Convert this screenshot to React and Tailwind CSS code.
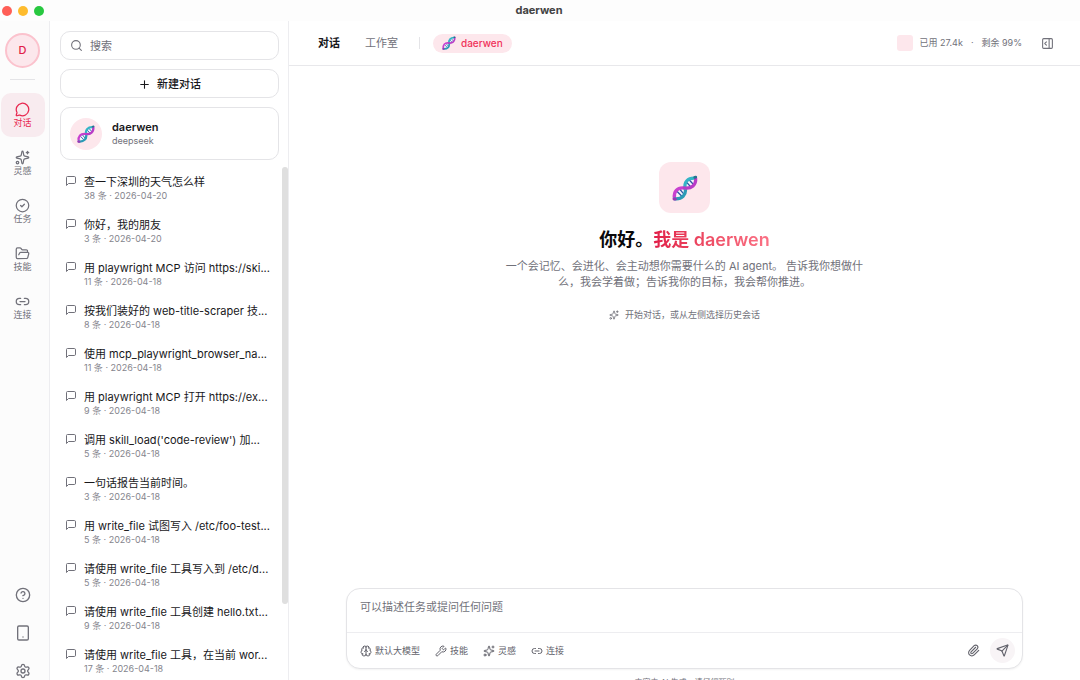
import React from 'react';
import {
  Brain, CircleCheck, CircleHelp, FolderOpen, Link2, MessageCircle, PanelRightOpen,
  Paperclip, Plus, Search, Send, Settings, Sparkles, Wrench,
} from 'lucide-react';
import { FiMessageSquare } from 'react-icons/fi';

const NAV = [
  { label: '对话', icon: MessageCircle, active: true },
  { label: '灵感', icon: Sparkles },
  { label: '任务', icon: CircleCheck },
  { label: '技能', icon: FolderOpen },
  { label: '连接', icon: Link2 },
];

const UTILITIES = [
  { label: '帮助', icon: CircleHelp },
  { label: '设备', icon: Device },
  { label: '设置', icon: Settings },
];

const SESSIONS = [
  { title: '查一下深圳的天气怎么样', count: 38, date: '2026-04-20' },
  { title: '你好，我的朋友', count: 3, date: '2026-04-20' },
  { title: '用 playwright MCP 访问 https://ski...', count: 11, date: '2026-04-18' },
  { title: '按我们装好的 web-title-scraper 技...', count: 8, date: '2026-04-18' },
  { title: '使用 mcp_playwright_browser_na...', count: 11, date: '2026-04-18' },
  { title: '用 playwright MCP 打开 https://ex...', count: 9, date: '2026-04-18' },
  { title: "调用 skill_load('code-review') 加...", count: 5, date: '2026-04-18' },
  { title: '一句话报告当前时间。', count: 3, date: '2026-04-18' },
  { title: '用 write_file 试图写入 /etc/foo-test...', count: 5, date: '2026-04-18' },
  { title: '请使用 write_file 工具写入到 /etc/d...', count: 5, date: '2026-04-18' },
  { title: '请使用 write_file 工具创建 hello.txt...', count: 9, date: '2026-04-18' },
  { title: '请使用 write_file 工具，在当前 wor...', count: 17, date: '2026-04-18' },
];

const TOOLS = [
  { label: '默认大模型', icon: Brain },
  { label: '技能', icon: Wrench },
  { label: '灵感', icon: Sparkles },
  { label: '连接', icon: Link2 },
];

function Device({ className, strokeWidth }) {
  return (
    <svg
      viewBox="0 0 24 24"
      fill="none"
      stroke="currentColor"
      strokeWidth={strokeWidth}
      strokeLinecap="round"
      className={className}
      aria-hidden="true"
    >
      <rect x="4" y="1.5" width="16" height="21" rx="2" />
      <path d="M12 18h.01" />
    </svg>
  );
}

function Dna({ className }) {
  return (
    <svg viewBox="0 0 24 24" fill="none" strokeLinecap="round" className={className} aria-hidden="true">
      {/* gaps between the strands */}
      <ellipse cx="7.4" cy="16.4" rx="4" ry="4" fill="#f6f4fb" />
      <ellipse cx="16.8" cy="7.2" rx="4" ry="4" fill="#f6f4fb" />
      {/* rungs */}
      <path d="M5 15.4l3.8 4M7.6 13.6l3 3.6M13.8 7l3.2 3.6M16.2 4.8l3.6 4" stroke="#2d5aa5" strokeWidth="1.2" />
      {/* strands, crossing in the middle */}
      <path d="M2.2 21.4C1.4 15.4 4.6 11.2 11.4 12" stroke="#c840cf" strokeWidth="3" />
      <path d="M2.6 22C9 22.6 13.4 18.6 12.2 12.4" stroke="#2a9bb5" strokeWidth="3" />
      <path d="M12.2 12.4C11 6.4 14.4 2.6 21.2 3" stroke="#34b4c6" strokeWidth="3" />
      <path d="M11.4 12C18.2 13 22.4 9 21.8 2.8" stroke="#b93cc6" strokeWidth="3" />
      <path d="M1.8 22.2h1.4" stroke="#9a35b5" strokeWidth="2.6" />
      <path d="M21 2.2l.9-.2" stroke="#23758f" strokeWidth="2.6" />
    </svg>
  );
}

function TitleBar() {
  return (
    <header className="flex h-[21px] shrink-0 items-center bg-[#fdfdfd]">
      <div className="flex w-12 shrink-0 gap-[6px] pl-[2px]">
        <span className="size-[10px] rounded-full bg-[#ff5f57]" />
        <span className="size-[10px] rounded-full bg-[#febc2e]" />
        <span className="size-[10px] rounded-full bg-[#28c840]" />
      </div>
      <h1 className="flex-1 text-center text-[11px] font-bold text-[#434343]">daerwen</h1>
      <div className="w-[50px] shrink-0" />
    </header>
  );
}

function Rail() {
  return (
    <nav className="flex w-[50px] shrink-0 flex-col items-center border-r border-[#ededf0] bg-[#fcfcfc] pt-3 pr-1">
      <button className="flex size-[35px] shrink-0 items-center justify-center rounded-full border-2 border-[#fbc2cd] bg-[#fce7ec] text-[11px] font-medium text-[#e11d48]">
        D
      </button>
      <div className="mt-[11px] h-px w-[25px] shrink-0 bg-[#e4e4e7]" />
      <div className="mt-[13px] flex flex-col gap-1">
        {NAV.map(({ label, icon: Icon, active }) => (
          <button
            key={label}
            className={`flex size-11 flex-col items-center justify-center rounded-[10px] pt-px ${
              active ? 'bg-[#f8ebef] text-[#e8274f]' : 'text-[#71717a]'
            }`}
          >
            <Icon className="size-[15px]" strokeWidth={2} />
            <span className="text-[9px] leading-[12px]">{label}</span>
          </button>
        ))}
      </div>
      <div className="mt-auto flex flex-col gap-[22px] pb-px">
        {UTILITIES.map(({ label, icon: Icon }) => (
          <button key={label} aria-label={label} className="text-[#71717a]">
            <Icon className="size-4" strokeWidth={2} />
          </button>
        ))}
      </div>
    </nav>
  );
}

function Sidebar() {
  return (
    <aside className="flex w-[239px] shrink-0 flex-col border-r border-[#ededf0] bg-white">
      <div className="flex flex-col gap-[9px] pt-[10px] pr-[9px] pl-[10px]">
        <label className="flex h-[29px] items-center gap-[7px] rounded-[10px] border border-[#e4e4e7] px-[9px]">
          <Search className="size-[13px] shrink-0 text-[#71717a]" />
          <input
            type="text"
            aria-label="搜索"
            placeholder="搜索"
            className="w-full min-w-0 pt-px text-[11px] outline-none placeholder:text-[#71717a]"
          />
        </label>
        <button className="flex h-[29px] items-center justify-center gap-[6px] rounded-[10px] border border-[#e4e4e7] pt-px text-[11px] font-medium text-[#18181b]">
          <Plus className="size-[13px]" />
          新建对话
        </button>
        <button className="flex h-[53px] items-center gap-[10px] rounded-[10px] border border-[#e4e4e7] px-[9px] text-left">
          <span className="flex size-8 shrink-0 items-center justify-center rounded-full bg-[#fde7ec]">
            <Dna className="size-[18px]" />
          </span>
          <span className="flex flex-col pt-px">
            <span className="text-[11px] leading-[14px] font-semibold text-[#18181b]">daerwen</span>
            <span className="text-[9px] leading-[14px] text-[#71717a]">deepseek</span>
          </span>
        </button>
      </div>

      <div className="mt-[6px] flex min-h-0 flex-1 overflow-hidden">
        <ul className="min-w-0 flex-1">
          {SESSIONS.map((s) => (
            <li key={s.title} className="h-[43px]">
              <button className="flex w-full gap-[7px] pt-[9px] pl-[15px] text-left whitespace-nowrap">
                <FiMessageSquare className="size-3 shrink-0 text-[#71717a]" />
                <span className="flex flex-col">
                  <span className="text-[11px] leading-[15px] text-[#18181b]">{s.title}</span>
                  <span className="text-[9px] leading-[11px] text-[#85858d]">
                    {s.count} 条 · {s.date}
                  </span>
                </span>
              </button>
            </li>
          ))}
        </ul>
        <div className="mt-px h-[85%] w-[6px] shrink-0 rounded-full bg-[#dfdfdf]" />
      </div>
    </aside>
  );
}

function TopBar() {
  return (
    <div className="flex h-[45px] shrink-0 items-center border-b border-[#e8e8eb] pr-[26px] pl-[29px]">
      <button className="pt-px text-[11px] font-semibold text-[#18181b]">对话</button>
      <button className="ml-[25px] pt-px text-[11px] text-[#71717a]">工作室</button>
      <div className="mr-[13px] ml-[21px] h-3 w-px bg-[#e4e4e7]" />
      <button className="flex h-[19px] items-center gap-[5px] rounded-full bg-[#fde7ec] px-[9px] text-[10px] font-medium text-[#f0325a]">
        <Dna className="size-[14px]" />
        daerwen
      </button>
      <div className="ml-auto flex items-center text-[9px] text-[#71717a]">
        <span className="mr-[7px] size-4 rounded-[3px] bg-[#fde7ec]" />
        <span>已用 27.4k</span>
        <span className="mx-2">·</span>
        <span>剩余 99%</span>
        <button aria-label="展开面板" className="ml-[19px]">
          <PanelRightOpen className="size-[13px]" />
        </button>
      </div>
    </div>
  );
}

function Welcome() {
  return (
    <section className="flex flex-1 flex-col items-center pt-24 text-center">
      <div className="flex size-[51px] items-center justify-center rounded-xl bg-[#fde7ec]">
        <Dna className="size-[26px]" />
      </div>
      <h2 className="mt-[15px] text-[18px] leading-6 font-semibold text-[#09090b]">
        你好。
        <span className="bg-linear-to-r from-[#e11d48] to-[#fb7185] bg-clip-text text-transparent">我是 daerwen</span>
      </h2>
      <p className="mt-[6px] w-[360px] text-[11px] leading-4 text-[#71717a]">
        一个会记忆、会进化、会主动想你需要什么的 AI agent。 告诉我你想做什么，我会学着做；告诉我你的目标，我会帮你推进。
      </p>
      <p className="mt-[18px] flex items-center gap-[6px] text-[9px] leading-[14px] text-[#71717a]">
        <Sparkles className="size-[10px]" />
        开始对话，或从左侧选择历史会话
      </p>
    </section>
  );
}

function Composer() {
  return (
    <div className="mx-auto w-full max-w-[677px] shrink-0">
      <form className="rounded-[14px] border border-[#e4e4e7] bg-white shadow-xs">
        <textarea
          aria-label="消息"
          placeholder="可以描述任务或提问任何问题"
          className="block h-[43px] w-full resize-none px-[13px] pt-[10px] text-[11px] leading-4 outline-none placeholder:text-[#71717a]"
        />
        <div className="flex h-[36px] items-center gap-[15px] border-t border-[#ededf0] pr-[7px] pl-[13px] text-[9px] text-[#62626b]">
          {TOOLS.map(({ label, icon: Icon }) => (
            <button key={label} type="button" className="flex items-center gap-[3px]">
              <Icon className="size-[12px]" />
              {label}
            </button>
          ))}
          <div className="ml-auto flex items-center gap-[10px]">
            <button type="button" aria-label="添加附件">
              <Paperclip className="size-[13px]" />
            </button>
            <button aria-label="发送" className="flex size-[25px] items-center justify-center rounded-full bg-[#f8f4f6]">
              <Send className="size-[13px]" />
            </button>
          </div>
        </div>
      </form>
      <p className="mt-[8px] h-[3px] text-center text-[8px] leading-[10px] text-[#71717a]">
        内容由 AI 生成，请仔细甄别
      </p>
    </div>
  );
}

export default function App() {
  return (
    <div className="flex h-screen flex-col overflow-hidden bg-white font-['Inter','Noto_Sans_CJK_SC',sans-serif]">
      <TitleBar />
      <div className="flex min-h-0 flex-1">
        <Rail />
        <Sidebar />
        <main className="flex min-w-0 flex-1 flex-col">
          <TopBar />
          <Welcome />
          <Composer />
        </main>
      </div>
    </div>
  );
}
